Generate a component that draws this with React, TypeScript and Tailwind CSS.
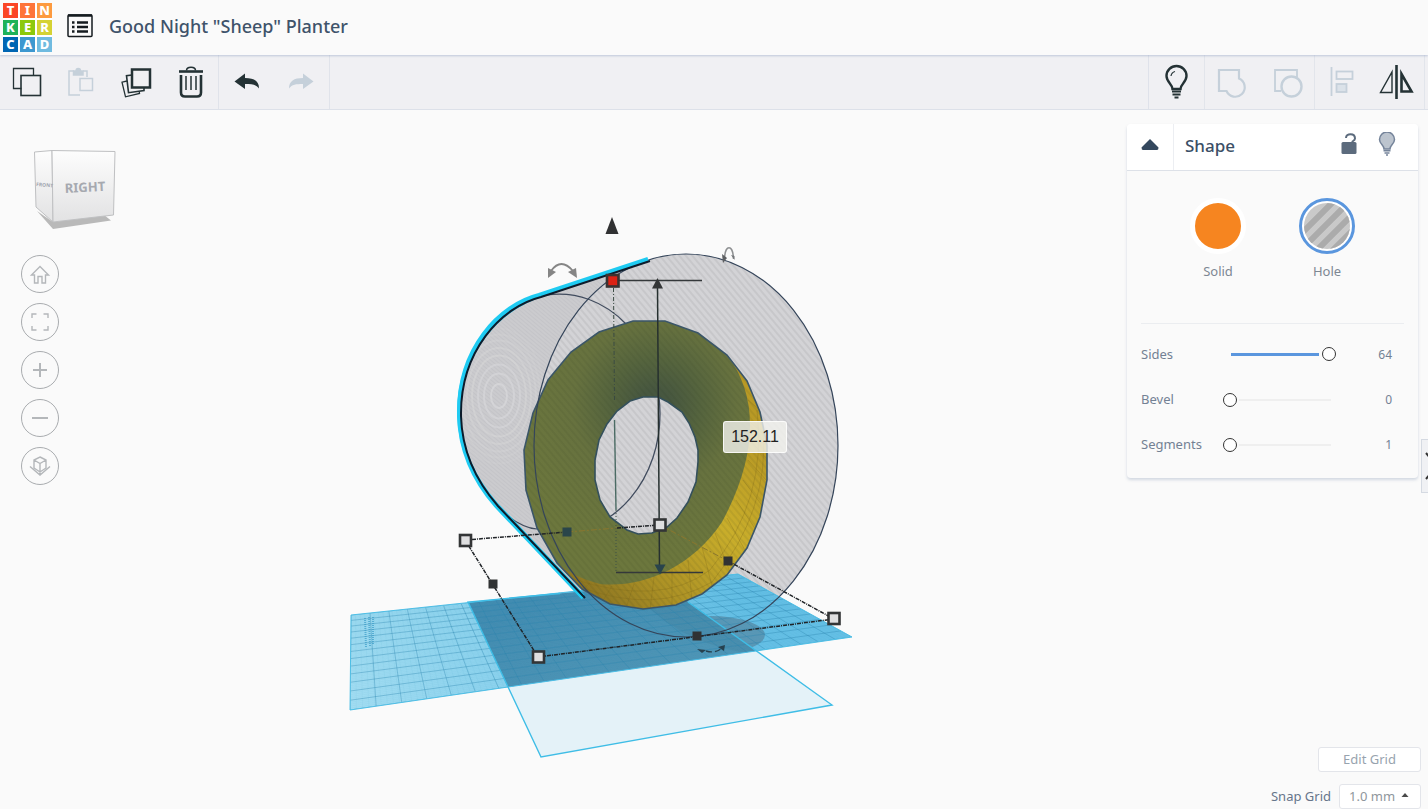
import { useState } from "react";
import type { ReactNode } from "react";

const logoTiles = [
  { letter: "T", color: "bg-[#fb4626]" },
  { letter: "I", color: "bg-[#fe7439]" },
  { letter: "N", color: "bg-[#fd9a3f]" },
  { letter: "K", color: "bg-[#1fb25a]" },
  { letter: "E", color: "bg-[#8cc90c]" },
  { letter: "R", color: "bg-[#d5d233]" },
  { letter: "C", color: "bg-[#0066b3]" },
  { letter: "A", color: "bg-[#3d98d0]" },
  { letter: "D", color: "bg-[#70bbe0]" },
];

function Logo() {
  return (
    <a href="#home" aria-label="Tinkercad" className="grid grid-cols-3 gap-[2px] bg-white">
      {logoTiles.map((t) => (
        <span
          key={t.letter}
          className={`flex size-[15px] items-center justify-center text-[13px] leading-none font-extrabold text-white ${t.color}`}
        >
          {t.letter}
        </span>
      ))}
    </a>
  );
}

function ToolButton({ label, disabled, children }: { label: string; disabled?: boolean; children: ReactNode }) {
  return (
    <button
      type="button"
      aria-label={label}
      disabled={disabled}
      className={`flex items-center justify-center ${disabled ? "text-[#c5d0da]" : "text-[#243235]"}`}
    >
      {children}
    </button>
  );
}

function Icon({ children, size = 36 }: { children: ReactNode; size?: number }) {
  return (
    <svg width={size} height={size} viewBox={`0 0 ${size} ${size}`} fill="none" stroke="currentColor" strokeWidth="1.5">
      {children}
    </svg>
  );
}

function Toolbar() {
  return (
    <div className="flex h-[55px] justify-between border-b border-[#dde1e9] bg-[#f0f0f3]">
      <div className="flex">
        <div className="grid w-[219px] grid-cols-4 border-r border-[#e0e3ea]">
          <ToolButton label="Copy">
            <Icon>
              <path d="M12.500 24.500H4.500V4.500H24.500V11.500" strokeWidth="1.300" />
              <rect x="12" y="11.500" width="19.500" height="20" strokeWidth="1.600" />
            </Icon>
          </ToolButton>
          <ToolButton label="Paste" disabled>
            <Icon>
              <path d="M16 31H5V7h5M19 7h4v6" />
              <path d="M9.500 11h9.500V7h-2.500c0-3.500-4.500-3.500-4.500 0H9.500z" fill="currentColor" />
              <rect x="16" y="14.500" width="12.500" height="12" />
            </Icon>
          </ToolButton>
          <ToolButton label="Duplicate">
            <Icon>
              <rect x="14" y="5.500" width="18" height="18" strokeWidth="2.500" />
              <path d="M14 11l-5.500.7 2 17 15.500-2.200v-2.800" strokeWidth="1.600" />
              <path d="M9 17l-5 1.200 3.500 14.600 14-3.300-.3-2" strokeWidth="1.300" />
            </Icon>
          </ToolButton>
          <ToolButton label="Delete">
            <Icon>
              <path d="M6 7.500h24" strokeWidth="2.600" />
              <path d="M13.500 6.500C13.500 2 22.500 2 22.500 6.500" strokeWidth="1.500" />
              <path d="M8 11v17.500q0 4 4 4h12q4 0 4-4V11" strokeWidth="2.600" />
              <path d="M13 12v14M18 12v14M23 12v14" strokeWidth="1.500" />
            </Icon>
          </ToolButton>
        </div>
        <div className="grid w-[111px] grid-cols-2 border-r border-[#e0e3ea]">
          <ToolButton label="Undo">
            <Icon>
              <path d="M5.500 17.500L16 9.500v4.500c9 0 14 3 14 10.500-3-4-7-4.500-14-4.500v5z" fill="currentColor" stroke="none" />
            </Icon>
          </ToolButton>
          <ToolButton label="Redo" disabled>
            <Icon>
              <path d="M29.500 17.500L19 9.500v4.500C10 14 5 17 5 24.500 8 20.500 12 20 19 20v5z" fill="currentColor" stroke="none" />
            </Icon>
          </ToolButton>
        </div>
      </div>
      <div className="flex">
        <div className="grid w-[56px] grid-cols-1 border-l border-[#dfe2ea]">
          <ToolButton label="Show all">
            <Icon>
              <path d="M13.500 25c0-5-6-7-6-13a10 10 0 0 1 20 0c0 6-6 8-6 13z" strokeWidth="2.400" />
              <path d="M12 12q.5-3.500 4-4.500" strokeWidth="1.200" />
              <path d="M13 27.500h9M13.500 30.500h8M15.500 33.500h4" strokeWidth="1.900" />
            </Icon>
          </ToolButton>
        </div>
        <div className="grid w-[110px] grid-cols-2 border-l border-[#e2e5eb]">
          <ToolButton label="Group" disabled>
            <Icon>
              <path d="M5 6h20v8.500a9.500 9.500 0 1 1-12.500 12.500H5z" strokeWidth="2.200" />
            </Icon>
          </ToolButton>
          <ToolButton label="Ungroup" disabled>
            <Icon>
              <path d="M12 27H6V6h22v7" strokeWidth="1.800" />
              <circle cx="22.500" cy="22.500" r="10" strokeWidth="2.400" />
            </Icon>
          </ToolButton>
        </div>
        <div className="mr-[3px] grid w-[111px] grid-cols-2 border-x border-[#e2e5eb]">
          <ToolButton label="Align" disabled>
            <Icon>
              <path d="M7.500 3v29" strokeWidth="1.800" />
              <rect x="12.500" y="7.500" width="16" height="7.500" strokeWidth="1.800" />
              <rect x="12.500" y="20" width="10" height="8" strokeWidth="1.800" fill="#dbe2e9" />
            </Icon>
          </ToolButton>
          <ToolButton label="Mirror">
            <Icon>
              <path d="M17.500 1v34" strokeWidth="2.600" />
              <path d="M13 8V28.500H1.500z" strokeWidth="1.400" />
              <path d="M22.500 10v17.500h10z" strokeWidth="2.600" />
            </Icon>
          </ToolButton>
        </div>
      </div>
    </div>
  );
}

function ViewCube() {
  return (
    <svg width="100" height="90" viewBox="25 145 100 90" role="img" aria-label="View cube">
      <defs>
        <linearGradient id="face" x1="0" y1="0" x2="0" y2="1">
          <stop offset="0" stopColor="#fdfdfd" />
          <stop offset="1" stopColor="#e2e2e3" />
        </linearGradient>
      </defs>
      <path d="M37 211L53 229L111 220.500L104 215L53 222z" fill="#b9b9b9" />
      <path d="M34.500 152L52 150.500L53 222L36 207z" fill="url(#face)" stroke="#bfc0c2" />
      <path d="M52 150.500L115 151.500L113.500 215L53 222z" fill="url(#face)" stroke="#bfc0c2" />
      <text x="65" y="193" className="text-[13px] font-bold" fill="#a6a9b0" transform="rotate(-3 65 193)">
        RIGHT
      </text>
      <text x="36" y="186" className="text-[5px] font-bold" fill="#a2a6b0" transform="rotate(5 36 186)">
        FRONT
      </text>
    </svg>
  );
}

const viewButtons: { label: string; icon: ReactNode }[] = [
  { label: "Home view", icon: <path d="M2.500 12L11 3.500L19.500 12H16.500V20H13V13.500H9V20H5.500V12z" /> },
  { label: "Fit all in view", icon: <path d="M3 7V3h4.500M14.500 3H19v4M19 15v4h-4.500M7.500 19H3v-4" /> },
  { label: "Zoom in", icon: <path d="M4 11h14M11 4v14" strokeWidth="2" /> },
  { label: "Zoom out", icon: <path d="M3 11h16" strokeWidth="2" /> },
  {
    label: "Switch to flat view",
    icon: <path d="M11 2l6 3v8l-6 4-6-4V5zM5 5l6 3.500L17 5M11 8.500V20M1 11.500l10 8.500 10-8.500" />,
  },
];

function ViewControls() {
  return (
    <div className="flex w-[136px] shrink-0 flex-col pt-[35px]">
      <div className="ml-[25px]">
        <ViewCube />
      </div>
      <div className="mt-[20px] ml-[21px] flex flex-col gap-[10px]">
        {viewButtons.map((b) => (
          <button
            key={b.label}
            type="button"
            aria-label={b.label}
            className="flex size-[38px] items-center justify-center rounded-full border border-[#a9acaf] text-[#b4b7ba]"
          >
            <svg width="22" height="22" viewBox="0 0 22 22" fill="none" stroke="currentColor" strokeWidth="1.400">
              {b.icon}
            </svg>
          </button>
        ))}
      </div>
    </div>
  );
}

type Point = [number, number];

/* Projects unit-square coordinates onto the workplane quad. */
const corners: Point[] = [
  [351, 615],
  [738, 574],
  [852, 637],
  [350, 710],
];

function project(u: number, v: number): Point {
  const [[x0, y0], [x1, y1], [x2, y2], [x3, y3]] = corners;
  const dx1 = x1 - x2;
  const dx2 = x3 - x2;
  const sx = x0 - x1 + x2 - x3;
  const dy1 = y1 - y2;
  const dy2 = y3 - y2;
  const sy = y0 - y1 + y2 - y3;
  const det = dx1 * dy2 - dx2 * dy1;
  const g = (sx * dy2 - dx2 * sy) / det;
  const h = (dx1 * sy - sx * dy1) / det;
  const w = g * u + h * v + 1;
  return [
    ((x1 - x0 + g * x1) * u + (x3 - x0 + h * x3) * v + x0) / w,
    ((y1 - y0 + g * y1) * u + (y3 - y0 + h * y3) * v + y0) / w,
  ];
}

function gridPath(columns: number, rows: number) {
  let d = "";
  for (let i = 0; i <= columns; i++) {
    const a = project(i / columns, 0);
    const b = project(i / columns, 1);
    d += `M${a[0]} ${a[1]}L${b[0]} ${b[1]}`;
  }
  for (let j = 0; j <= rows; j++) {
    const a = project(0, j / rows);
    const b = project(1, j / rows);
    d += `M${a[0]} ${a[1]}L${b[0]} ${b[1]}`;
  }
  return d;
}

const plane = "M351 615L738 574L852 637L350 710z";
const lowerPlane = "M468 602L663 584L832 705L541 757z";
const torusOuter =
  "M633 321L665 321L698 333L727 355L747 381L760 412L767 445L767 480L760 517L747 548L727 575L702 594L676 605L643 609L610 604L582 589L557 563L537 528L526 490L524 450L533 413L548 380L571 352L599 332z";
const torusHole =
  "M643 397L658 397L668 402L682 412L689 423L695 437L698 450L698 462L696 482L688 502L677 518L667 527L652 533L638 534L627 530L610 517L600 500L595 480L595 460L599 440L607 424L617 411L630 401z";
const torusInside =
  "M727 355Q750 385 750 425Q750 470 722 522C690 570 640 588 600 584Q575 578 557 563L537 528L526 490L524 450L533 413L548 380L571 352L599 332L633 321L665 321L698 333z";
const body =
  "M649 260L540 296C500 306 459 350 460 415C461 450 475 480 497 505L584 597L690 637L690 254z";
const silhouette = "M649 260L540 296C500 306 459 350 460 415C461 450 475 480 497 505L584 597";

const cornerHandles: Point[] = [
  [465.5, 540.5],
  [660, 525],
  [834, 618.5],
  [538.5, 657],
];
const edgeHandles: Point[] = [
  [567, 532],
  [493, 584],
  [728, 561],
  [697, 636],
];

function Scene() {
  const [height, setHeight] = useState("152.11");
  return (
    <svg
      viewBox="136 110 991 699"
      className="h-full w-full min-w-0 flex-1"
      role="group"
      aria-label="Workplane"
      fill="none"
    >
      <defs>
        <pattern id="stripes" width="5" height="5" patternUnits="userSpaceOnUse" patternTransform="rotate(-40)">
          <rect width="5" height="5" fill="#d3d3d6" />
          <rect width="2" height="5" fill="#c7c7ca" />
        </pattern>
        <pattern id="fineStripes" width="3" height="3" patternUnits="userSpaceOnUse" patternTransform="rotate(-50)">
          <rect width="3" height="3" fill="#cbcbce" />
          <rect width="1" height="3" fill="#c4c4c8" />
        </pattern>
        <pattern id="overlay" width="5" height="5" patternUnits="userSpaceOnUse" patternTransform="rotate(-40)">
          <rect width="2" height="5" fill="#20301c" fillOpacity=".08" />
        </pattern>
        <linearGradient id="water" x1="350" y1="710" x2="740" y2="590" gradientUnits="userSpaceOnUse">
          <stop offset="0" stopColor="#a3ddf2" />
          <stop offset="1" stopColor="#66c0e6" />
        </linearGradient>
        <linearGradient id="shade" x1="560" y1="590" x2="600" y2="690" gradientUnits="userSpaceOnUse">
          <stop offset="0" stopColor="#438bb0" />
          <stop offset="1" stopColor="#4e94b5" />
        </linearGradient>
        <radialGradient id="olive" cx="655" cy="415" r="150" gradientUnits="userSpaceOnUse" gradientTransform="translate(0 -10)">
          <stop offset=".1" stopColor="#475740" />
          <stop offset=".3" stopColor="#55643e" />
          <stop offset=".55" stopColor="#67723f" />
          <stop offset="1" stopColor="#6c773d" />
        </radialGradient>
        <linearGradient id="gold" x1="760" y1="450" x2="600" y2="610" gradientUnits="userSpaceOnUse">
          <stop offset="0" stopColor="#b99a25" />
          <stop offset=".35" stopColor="#c9ae2b" />
          <stop offset=".75" stopColor="#ab9025" />
          <stop offset="1" stopColor="#8b7422" />
        </linearGradient>
        <clipPath id="planeClip">
          <path d={plane} />
        </clipPath>
        <clipPath id="lowerClip">
          <path d={lowerPlane} />
        </clipPath>
        <clipPath id="holeClip">
          <path d={torusHole} />
        </clipPath>
        <clipPath id="torusClip">
          <path d={torusOuter} />
        </clipPath>
        <clipPath id="bodyClip">
          <path d={body} />
        </clipPath>
      </defs>

      <path d={body} fill="url(#fineStripes)" />
      <g clipPath="url(#bodyClip)" stroke="#d9d9db" strokeOpacity=".6">
        {[8, 15, 21, 27, 32, 37, 41, 45].map((r, i) => (
          <ellipse key={r} cx="499" cy="396" rx={r} ry={r * 1.5} strokeWidth="2" strokeOpacity={0.7 - i * 0.08} />
        ))}
      </g>
      <ellipse cx="686" cy="445.500" rx="152" ry="191.500" fill="url(#stripes)" />

      <path d={lowerPlane} fill="#e4f2f8" />
      <path d={plane} fill="url(#water)" />
      <g clipPath="url(#planeClip)">
        <ellipse cx="710" cy="635" rx="55" ry="19" fill="#5b97b5" />
        <path d={lowerPlane} fill="url(#shade)" />
        <g clipPath="url(#lowerClip)">
          <path d="M640 590L765 590L765 655Q690 650 640 600z" fill="#45809f" fillOpacity=".35" />
        </g>
        <path d={gridPath(100, 65)} stroke="#4aaad2" strokeOpacity=".12" strokeWidth=".5" />
        <path d={gridPath(24, 13)} stroke="#2a83ae" strokeOpacity=".45" strokeWidth=".8" />
        <path d="M365 618L366 648M369 617L370 646M373 617L373 645" stroke="#3a9cc8" strokeOpacity=".7" strokeWidth="2" strokeDasharray="1 1" />
      </g>
      <path d={plane} stroke="#4fbfe6" />
      <path d="M560 593.500L468 602L541 757L832 705L688 602" stroke="#3fbde6" strokeWidth="1.400" />

      <path d="M547 295A101 119 0 0 1 626 324M497 507Q520 528 537 529" stroke="#414c5e" strokeWidth="1.200" />

      <g clipPath="url(#torusClip)">
        <path d={torusOuter} fill="url(#gold)" />
        <g stroke="#806b1c" strokeOpacity=".3" strokeWidth="1">
          <path d="M757 410Q768 500 710 570Q660 608 570 578M763 430Q770 510 712 582Q655 615 580 587" />
          <path d="M748 400L762 412M750 422L768 438M750 440L768 460M748 460L768 482M743 480L764 508M736 500L756 530M727 518L746 552M715 533L730 572M702 547L712 586M688 560L692 600M672 569L672 606M654 577L650 610M634 584L626 608M612 586L602 602M590 583L580 592" />
        </g>
        <path d={torusInside} fill="url(#olive)" />
        <path d={torusOuter} fill="url(#overlay)" />
      </g>
      <path d={torusHole} fill="url(#stripes)" />
      <g clipPath="url(#holeClip)">
        <ellipse cx="559" cy="414" rx="101" ry="119" stroke="#414c5e" strokeWidth="1.300" />
      </g>
      <path d={torusHole} stroke="#34505c" strokeWidth="1.600" />
      <path d={torusOuter} stroke="#3b5668" strokeWidth="1.600" />
      <ellipse cx="686" cy="445.500" rx="152" ry="191.500" stroke="#35455a" strokeWidth="1.200" />

      <path d={silhouette} stroke="#1fcbf2" strokeWidth="4" transform="translate(-1 -1)" />
      <path d="M547 292.500C500 306 459 350 460 415C461 450 475 480 497 505L584 597" stroke="#1fcbf2" strokeWidth="4" transform="translate(-1 1)" />
      <path d={silhouette} stroke="#0d1c2b" strokeWidth="2" transform="translate(1 1)" />

      <path d="M465 540L567 532M617 528L660 525M465 540L538 657L834 619L728 561" stroke="#202428" strokeWidth="1.500" strokeDasharray="4 1 1 1" />
      <path d="M567 532L617 528M660 525L728 561" stroke="#8a762e" strokeDasharray="6 2 2 2" />
      <path d="M613.500 288L614.500 400" stroke="#3a4a42" strokeDasharray="4 2 1 2" />
      <path d="M614.500 420L616 510" stroke="#4b6b64" strokeWidth="1.400" />
      <path d="M616 510V571" stroke="#3f5346" strokeDasharray="1 2" />
      <path d="M618 280.500H702M616 572.500H703" stroke="#34383a" strokeWidth="1.500" />
      <path d="M657.500 286L659.500 568" stroke="#26302f" strokeWidth="1.500" />
      <path d="M657.500 278L663 288.500H652z" fill="#333536" />
      <path d="M660 574.500L665.500 564.500H654.500z" fill="#29444c" />
      <path d="M612 217L618.500 234H605.500z" fill="#303132" />

      <g stroke="#858585" strokeWidth="1.800">
        <path d="M551 271Q561 257 573 271" />
        <path d="M548 268L556 272L548 278z" fill="#858585" strokeWidth="0" />
        <path d="M576 268L568 272L577 278z" fill="#858585" strokeWidth="0" />
      </g>
      <path d="M724.500 259C725 244 733 244 733.500 259" stroke="#8d8f91" strokeWidth="1.500" />
      <path d="M722 254l5 4-4 5z" fill="#5d5f62" />
      <path d="M731 255l3.500 1v4z" fill="#74777a" />
      <path d="M706 651Q716 654 723 647" stroke="#26404e" strokeWidth="1.400" strokeDasharray="6 3" />
      <path d="M697 649L706 650L702 653z" fill="#26404e" />
      <path d="M718 647L725 645L724 651z" fill="#26404e" />

      {edgeHandles.map(([x, y]) => (
        <rect key={`${x}-${y}`} x={x - 4.5} y={y - 4.5} width="9" height="9" fill={x === 567 ? "#2a454a" : "#303233"} />
      ))}
      {cornerHandles.map(([x, y]) => (
        <rect key={`${x}-${y}`} x={x - 5.5} y={y - 5.5} width="11" height="11" fill="#dfdfe0" stroke="#333536" strokeWidth="2.600" />
      ))}
      <rect x="607" y="275" width="11.500" height="11.500" fill="#dc2214" stroke="#3a3332" strokeWidth="2.600" />

      <foreignObject x="723" y="421" width="66" height="34">
        <input
          type="text"
          aria-label="Height"
          value={height}
          onChange={(e) => setHeight(e.target.value)}
          className="h-[32px] w-[64px] rounded-[3px] border border-white/80 bg-[#f2f2ee]/80 text-center font-['Liberation_Sans',sans-serif] text-[16px] leading-none text-[#222]"
        />
      </foreignObject>
    </svg>
  );
}

function SliderRow({ id, label, min, max, initial }: { id: string; label: string; min: number; max: number; initial: number }) {
  const [value, setValue] = useState(initial);
  const full = value === max;
  return (
    <div className="flex h-[45px] items-center pr-[12px] text-[#738194]">
      <label htmlFor={id} className="w-[82px] text-[13px]">
        {label}
      </label>
      <input
        id={id}
        type="range"
        min={min}
        max={max}
        value={value}
        onChange={(e) => setValue(Number(e.target.value))}
        className={`h-[20px] w-[113px] appearance-none bg-transparent [&::-webkit-slider-thumb]:size-[14px] [&::-webkit-slider-thumb]:appearance-none [&::-webkit-slider-thumb]:rounded-full [&::-webkit-slider-thumb]:border [&::-webkit-slider-thumb]:border-[#333] [&::-webkit-slider-thumb]:bg-white [&::-webkit-slider-thumb]:shadow-[0_0_0_2px_#fafafa] ${
          full
            ? "[&::-webkit-slider-runnable-track]:h-[3px] [&::-webkit-slider-runnable-track]:bg-[linear-gradient(to_right,transparent_8px,#5a96de_8px,#5a96de_96px,transparent_96px)] [&::-webkit-slider-thumb]:-mt-[6px]"
            : "[&::-webkit-slider-runnable-track]:h-[2px] [&::-webkit-slider-runnable-track]:bg-[linear-gradient(to_right,transparent_8px,#efefef_8px,#efefef_108px,transparent_108px)] [&::-webkit-slider-thumb]:-mt-[6px]"
        }`}
      />
      <output htmlFor={id} className="ml-auto text-[12px]">
        {value}
      </output>
    </div>
  );
}

function ShapePanel() {
  return (
    <section className="mr-[10px] rounded-[4px] bg-[#fafafa] shadow-[0_2px_3px_rgba(120,140,170,0.3)]">
      <header className="flex h-[47px] rounded-t-[4px] border-b border-[#dde1e8] bg-white">
        <button
          type="button"
          aria-label="Collapse panel"
          className="flex w-[47px] items-center justify-center border-r border-[#eceef2] pb-[4px] text-[#34485e]"
        >
          <svg width="18" height="12" viewBox="0 0 18 12" fill="currentColor">
            <path d="M9 0L17.500 8.500Q17.500 11 16 11H2Q.5 11 .5 8.500z" />
          </svg>
        </button>
        <h2 className="flex flex-1 items-center pb-[2px] pl-[11px] text-[17px] font-medium text-[#3b4f66]">Shape</h2>
        <button type="button" aria-label="Unlock shape" className="mr-[20px] pb-[6px] text-[#5c6b7d]">
          <svg width="18" height="24" viewBox="0 0 18 24" fill="none" stroke="currentColor" strokeWidth="2">
            <rect x="1.500" y="10" width="15" height="12" rx="1.500" fill="currentColor" stroke="none" />
            <path d="M6 6C6 1 15 .5 15 6.500Q15 8 12.500 9.500V11" />
          </svg>
        </button>
        <button type="button" aria-label="Hide shape" className="mr-[22px] pb-[6px] text-[#75849a]">
          <svg width="18" height="24" viewBox="0 0 18 24" fill="#bcc4ce" stroke="currentColor" strokeWidth="1.500">
            <path d="M6 17c0-4-4.500-5-4.500-9.500a7.500 7.500 0 0 1 15 0C16.500 12 12 13 12 17z" />
            <path d="M5.500 18.700h7M6.500 21h5M8 23h2" />
          </svg>
        </button>
      </header>
      <div className="px-[14px]">
        <div className="flex h-[153px] justify-center gap-[53px] border-b border-[#ebedf0] pt-[27px]">
          <button type="button" className="flex w-[56px] flex-col items-center gap-2 text-[13px] text-[#7d8793]">
            <span className="size-[56px] rounded-full border-[5px] border-white bg-[#f68520]" />
            Solid
          </button>
          <button type="button" className="flex w-[56px] flex-col items-center gap-2 text-[13px] text-[#7d8793]">
            <span className="size-[56px] rounded-full border-[3px] border-[#5a96de] bg-white p-[2px]">
              <svg viewBox="0 0 46 46" className="size-full">
                <clipPath id="swatch">
                  <circle cx="23" cy="23" r="23" />
                </clipPath>
                <g clipPath="url(#swatch)">
                  <rect width="46" height="46" fill="#c9c9c9" />
                  <path d="M-10 38L38 -10M-10 54L54 -10M-4 64L64 -4M12 64L64 12" stroke="#ababab" strokeWidth="6" />
                </g>
              </svg>
            </span>
            Hole
          </button>
        </div>
        <div className="pt-[8px] pb-[11px]">
          <SliderRow id="sides" label="Sides" min={3} max={64} initial={64} />
          <SliderRow id="bevel" label="Bevel" min={0} max={10} initial={0} />
          <SliderRow id="segments" label="Segments" min={1} max={10} initial={1} />
        </div>
      </div>
    </section>
  );
}

function GridControls() {
  return (
    <div className="mr-[7px] flex flex-col items-end gap-[12px]">
      <button
        type="button"
        className="h-[25px] w-[103px] rounded-[3px] border border-[#e3e5ea] bg-white text-[13px] leading-none text-[#97a3ae]"
      >
        Edit Grid
      </button>
      <div className="flex items-center gap-[8px]">
        <label htmlFor="snap" className="text-[13px] leading-none text-[#66758a]">
          Snap Grid
        </label>
        <span className="relative">
          <select
            id="snap"
            defaultValue="1.0"
            className="block h-[25px] w-[82px] appearance-none rounded-[3px] border border-[#e3e5ea] bg-white pl-[9px] text-[13px] leading-none text-[#8f969c]"
          >
            <option value="0.5">0.5 mm</option>
            <option value="1.0">1.0 mm</option>
            <option value="2.0">2.0 mm</option>
          </select>
          <svg width="8" height="5" viewBox="0 0 8 5" className="pointer-events-none absolute top-[9px] right-[12px]" fill="#4a4a4a">
            <path d="M4 0L7.500 4H.5z" />
          </svg>
        </span>
      </div>
    </div>
  );
}

export default function App() {
  return (
    <div className="flex min-h-screen flex-col bg-[#fafafa] font-['Noto_Sans',sans-serif]">
      <header className="relative flex h-[55px] items-center bg-[#fafafa] pl-[3px] shadow-[0_1px_2px_rgba(130,150,190,0.45)]">
        <Logo />
        <button type="button" aria-label="My designs" className="ml-[15px] pb-[3px]">
          <svg width="26" height="24" viewBox="0 0 26 24" fill="none" stroke="#151b1f">
            <rect x="1" y="1" width="24" height="21.500" rx="1" strokeWidth="1.500" />
            <path d="M1 1.500h24" strokeWidth="2.500" />
            <path d="M5 8.500h2.500M5 13h2.500M5 17.500h2.500M10 8.500h11M10 13h11M10 17.500h11" strokeWidth="2.400" />
          </svg>
        </button>
        <h1 className="ml-[16px] pb-[3px] text-[18px] font-medium text-[#3f536a]">Good Night "Sheep" Planter</h1>
      </header>
      <Toolbar />
      <main className="relative flex flex-1">
        <ViewControls />
        <Scene />
        <aside className="flex w-[301px] shrink-0 flex-col justify-between pt-[14px]">
          <ShapePanel />
          <GridControls />
        </aside>
        <button
          type="button"
          aria-label="Toggle shapes library"
          className="absolute top-[329px] right-0 h-[54px] w-[7px] overflow-hidden border border-r-0 border-[#d5dae2] bg-[#f0f1f4]"
        >
          <svg width="14" height="28" viewBox="0 0 14 28" fill="none" stroke="#333" strokeWidth="2" className="ml-[3px]">
            <path d="M1 1L12 14L1 27" />
          </svg>
        </button>
      </main>
    </div>
  );
}
